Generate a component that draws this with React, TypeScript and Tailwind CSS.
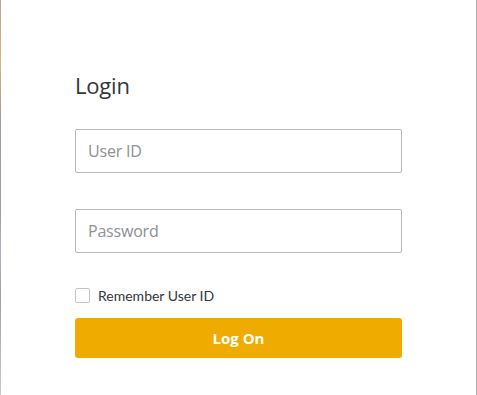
import React from 'react';

export default function App() {
  return (
    <div className="flex w-[477px] h-[395px] bg-white overflow-hidden" style={{ fontFamily: '"Open Sans", "Noto Sans", sans-serif' }}>
      {/* edge of the background picture */}
      <div className="w-px h-full bg-[linear-gradient(180deg,#b9a394_0%,#d6b77a_15%,#a39c98_30%,#9d9fa6_55%,#aeb6c4_63%,#9c9ea4_75%,#c9cbd3_100%)]"></div>

      <div className="flex-1 pl-[74px] pt-[70px]">
        <div className="w-[327px] flex flex-col">
          <h1 className="text-[22px] leading-[30px] text-[#32363a] font-normal tracking-[-0.2px]">Login</h1>

          <input
            type="text"
            placeholder="User ID"
            className="mt-[29px] h-[44px] w-full rounded-[2px] border border-[#b8b8b8] px-3 text-[16px] text-[#32363a] placeholder:text-[#8d9094] outline-none tracking-[-0.2px]"
          />

          <input
            type="password"
            placeholder="Password"
            className="mt-[36px] h-[44px] w-full rounded-[2px] border border-[#b8b8b8] px-3 text-[16px] text-[#32363a] placeholder:text-[#8d9094] outline-none tracking-[-0.2px]"
          />

          <label className="mt-[35px] flex items-center gap-2 h-[15px]">
            <span className="w-[15px] h-[15px] rounded-[2px] border border-[#c4c4c4] bg-white"></span>
            <span className="text-[14px] text-[#32363a]" style={{ fontFamily: 'Lato, "Open Sans", sans-serif' }}>Remember User ID</span>
          </label>

          <button className="mt-[15px] h-[40px] w-full rounded-[3px] bg-[#f0ab00] text-white text-[15px] font-bold">
            Log On
          </button>
        </div>
      </div>

      <div className="w-px h-full bg-[#a9a9a9]"></div>
    </div>
  );
}
